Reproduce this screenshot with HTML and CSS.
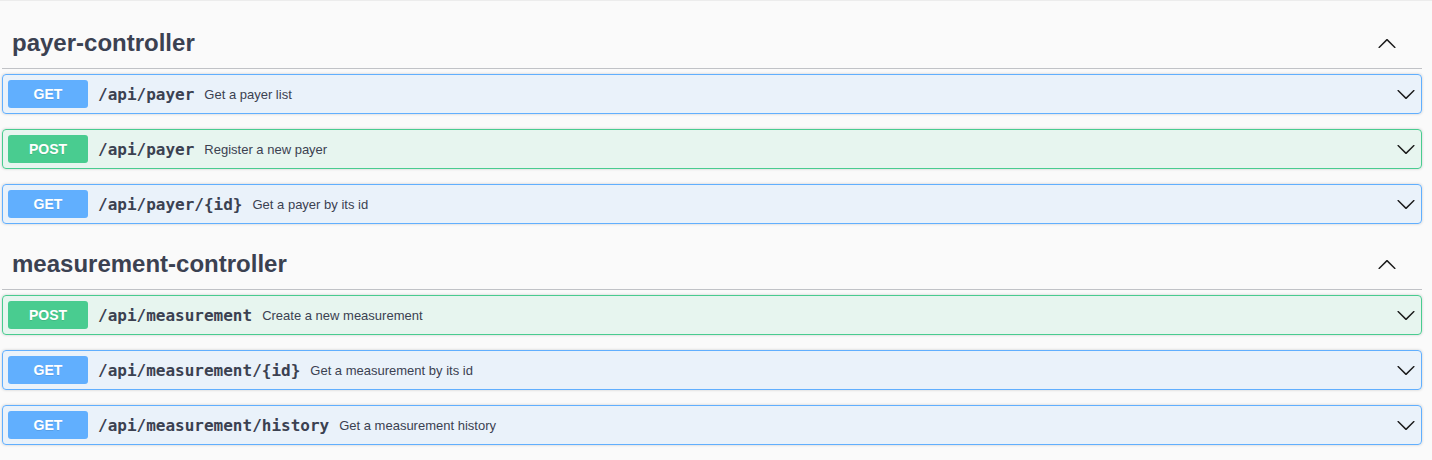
FILE: index.html
```html
<!DOCTYPE html>
<html>
<head>
<meta charset="utf-8">
<link rel="stylesheet" href="styles.css">
</head>
<body>
<div class="wrapper">
  <section class="tag-section">
    <div class="tag-header">
      <h3 class="tag-title">payer-controller</h3>
      <svg class="arrow-up" width="20" height="20" viewBox="0 0 20 20"><path d="M17.418 14.908c.272.268.709.268.979 0s.271-.701 0-.969l-7.908-7.83c-.27-.268-.707-.268-.979 0l-7.908 7.83c-.27.268-.27.701 0 .969.271.268.709.268.979 0L10 7.767l7.418 7.141z"/></svg>
    </div>
    <div class="opblock get">
      <span class="method">GET</span>
      <span class="path">/api/payer</span>
      <span class="desc">Get a payer list</span>
      <svg class="arrow" width="20" height="20" viewBox="0 0 20 20"><path d="M17.418 6.109c.272-.268.709-.268.979 0s.271.701 0 .969l-7.908 7.83c-.27.268-.707.268-.979 0l-7.908-7.83c-.27-.268-.27-.701 0-.969.271-.268.709-.268.979 0L10 13.25l7.418-7.141z"/></svg>
    </div>
    <div class="opblock post">
      <span class="method">POST</span>
      <span class="path">/api/payer</span>
      <span class="desc">Register a new payer</span>
      <svg class="arrow" width="20" height="20" viewBox="0 0 20 20"><path d="M17.418 6.109c.272-.268.709-.268.979 0s.271.701 0 .969l-7.908 7.83c-.27.268-.707.268-.979 0l-7.908-7.83c-.27-.268-.27-.701 0-.969.271-.268.709-.268.979 0L10 13.25l7.418-7.141z"/></svg>
    </div>
    <div class="opblock get">
      <span class="method">GET</span>
      <span class="path">/api/payer/{id}</span>
      <span class="desc">Get a payer by its id</span>
      <svg class="arrow" width="20" height="20" viewBox="0 0 20 20"><path d="M17.418 6.109c.272-.268.709-.268.979 0s.271.701 0 .969l-7.908 7.83c-.27.268-.707.268-.979 0l-7.908-7.830c-.27-.268-.27-.701 0-.969.271-.268.709-.268.979 0L10 13.25l7.418-7.141z"/></svg>
    </div>
  </section>
  <section class="tag-section">
    <div class="tag-header">
      <h3 class="tag-title">measurement-controller</h3>
      <svg class="arrow-up" width="20" height="20" viewBox="0 0 20 20"><path d="M17.418 14.908c.272.268.709.268.979 0s.271-.701 0-.969l-7.908-7.83c-.27-.268-.707-.268-.979 0l-7.908 7.83c-.27.268-.27.701 0 .969.271.268.709.268.979 0L10 7.767l7.418 7.141z"/></svg>
    </div>
    <div class="opblock post">
      <span class="method">POST</span>
      <span class="path">/api/measurement</span>
      <span class="desc">Create a new measurement</span>
      <svg class="arrow" width="20" height="20" viewBox="0 0 20 20"><path d="M17.418 6.109c.272-.268.709-.268.979 0s.271.701 0 .969l-7.908 7.83c-.27.268-.707.268-.979 0l-7.908-7.83c-.27-.268-.27-.701 0-.969.271-.268.709-.268.979 0L10 13.25l7.418-7.141z"/></svg>
    </div>
    <div class="opblock get">
      <span class="method">GET</span>
      <span class="path">/api/measurement/{id}</span>
      <span class="desc">Get a measurement by its id</span>
      <svg class="arrow" width="20" height="20" viewBox="0 0 20 20"><path d="M17.418 6.109c.272-.268.709-.268.979 0s.271.701 0 .969l-7.908 7.83c-.27.268-.707.268-.979 0l-7.908-7.83c-.27-.268-.27-.701 0-.969.271-.268.709-.268.979 0L10 13.25l7.418-7.141z"/></svg>
    </div>
    <div class="opblock get">
      <span class="method">GET</span>
      <span class="path">/api/measurement/history</span>
      <span class="desc">Get a measurement history</span>
      <svg class="arrow" width="20" height="20" viewBox="0 0 20 20"><path d="M17.418 6.109c.272-.268.709-.268.979 0s.271.701 0 .969l-7.908 7.83c-.27.268-.707.268-.979 0l-7.908-7.83c-.27-.268-.27-.701 0-.969.271-.268.709-.268.979 0L10 13.25l7.418-7.141z"/></svg>
    </div>
  </section>
</div>
</body>
</html>
```
FILE: styles.css
```css
html, body {
  margin: 0;
  padding: 0;
  background: #fafafa;
}
body {
  border-top: 1px solid #ececec;
  padding: 17px 0 0 2px;
  font-family: "Liberation Sans", Arial, sans-serif;
  color: #3b4151;
}
.wrapper {
  width: 1420px;
}
.tag-section {
  display: flex;
  flex-direction: column;
}
.tag-header {
  display: flex;
  align-items: center;
  height: 30px;
  padding: 10px 25px 10px 10px;
  border-bottom: 1px solid rgba(59, 65, 81, 0.3);
  margin-bottom: 5px;
}
.tag-title {
  flex: 1;
  margin: 0;
  font-size: 24px;
  font-weight: 700;
  line-height: 30px;
  color: #3b4151;
}
.arrow-up, .arrow {
  flex: none;
  fill: #1b1b1b;
}
.opblock {
  display: flex;
  align-items: center;
  padding: 5px;
  border: 1px solid #000;
  border-radius: 4px;
  box-shadow: 0 0 3px rgba(0, 0, 0, 0.19);
  margin-bottom: 15px;
}
.opblock.get {
  background: rgba(97, 175, 254, 0.1);
  border-color: #61affe;
}
.opblock.post {
  background: rgba(73, 204, 144, 0.1);
  border-color: #49cc90;
}
.method {
  min-width: 80px;
  padding: 6px 0;
  border-radius: 3px;
  font-size: 14px;
  font-weight: 700;
  line-height: 16px;
  text-align: center;
  color: #fff;
  text-shadow: 0 1px 0 rgba(0, 0, 0, 0.1);
}
.get .method {
  background: #61affe;
}
.post .method {
  background: #49cc90;
}
.path {
  padding: 0 10px;
  font-family: "DejaVu Sans Mono", "Liberation Mono", monospace;
  font-size: 16px;
  font-weight: 600;
  color: #3b4151;
}
.desc {
  flex: 1;
  font-size: 13px;
  color: #3b4151;
}
```
